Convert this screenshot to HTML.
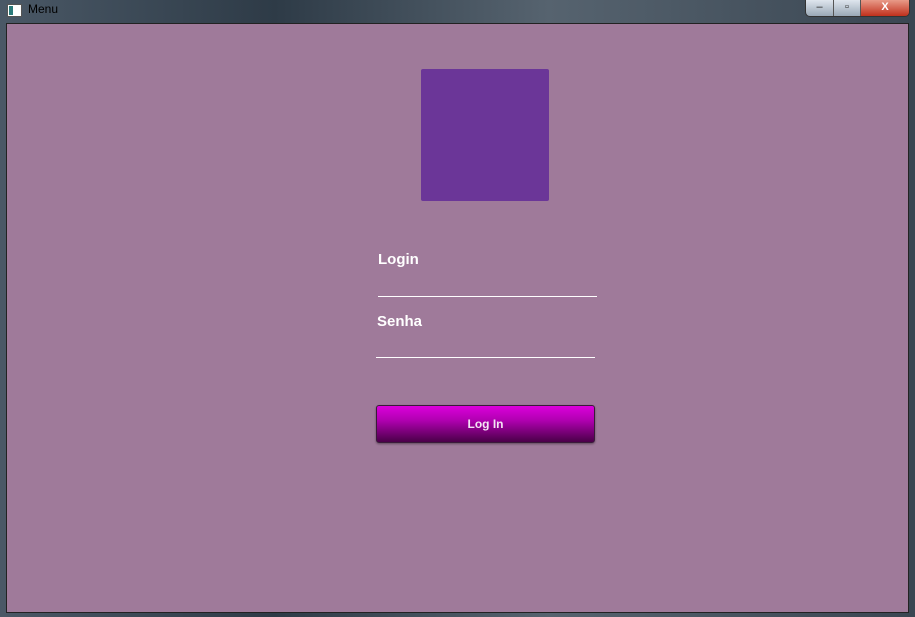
<!DOCTYPE html>
<html><head><style>
body{margin:0;width:915px;height:617px;overflow:hidden;background:linear-gradient(90deg,#4a5866,#2e3b47 30%,#56636f 60%,#3a4652);position:relative;font-family:"Liberation Sans",sans-serif}
.title{position:absolute;left:28px;top:2px;font-size:12px;color:#000}
.ico{position:absolute;left:7px;top:4px;width:13px;height:11px;background:#fff;border:1px solid #555}
.ico:before{content:"";position:absolute;left:1px;top:1px;width:4px;height:9px;background:#2a7a7a}
.btns{position:absolute;left:805px;top:0;width:103px;height:16px;border:1px solid #333;border-top:none;border-radius:0 0 5px 5px;overflow:hidden;display:flex}
.btns div{height:16px;background:linear-gradient(#dfe6ee,#9aa8b6);border-right:1px solid #555;color:#222;font-size:11px;text-align:center;line-height:15px}
.content{position:absolute;left:6px;top:23px;width:901px;height:588px;background:#9f7a9a;border:1px solid #222}
.logo{position:absolute;left:414px;top:45px;width:128px;height:132px;background:#6b3698;border-radius:2px}
.lbl{position:absolute;color:#fff;font-weight:bold;font-size:15px}
.line{position:absolute;height:1px;background:#fff}
.btn{position:absolute;left:369px;top:381px;width:217px;height:36px;border:1px solid #3a1a3a;border-radius:3px;background:linear-gradient(#dc00dc,#b000b0 40%,#4a0048);color:#f4e4f4;font-weight:bold;font-size:12px;text-align:center;line-height:36px;box-shadow:0 1px 2px rgba(0,0,0,.4)}
</style></head><body>
<div class="ico"></div><div class="title">Menu</div>
<div class="btns"><div style="width:27px">–</div><div style="width:26px">▫</div><div style="flex:1;background:linear-gradient(#e89a88,#c0301c);color:#fff;border:none;font-weight:bold">X</div></div>
<div class="content">
<div class="logo"></div>
<div class="lbl" style="left:371px;top:227px">Login</div>
<div class="line" style="left:371px;top:272px;width:219px"></div>
<div class="lbl" style="left:370px;top:289px">Senha</div>
<div class="line" style="left:369px;top:333px;width:219px"></div>
<div class="btn">Log In</div>
</div>
</body></html>
